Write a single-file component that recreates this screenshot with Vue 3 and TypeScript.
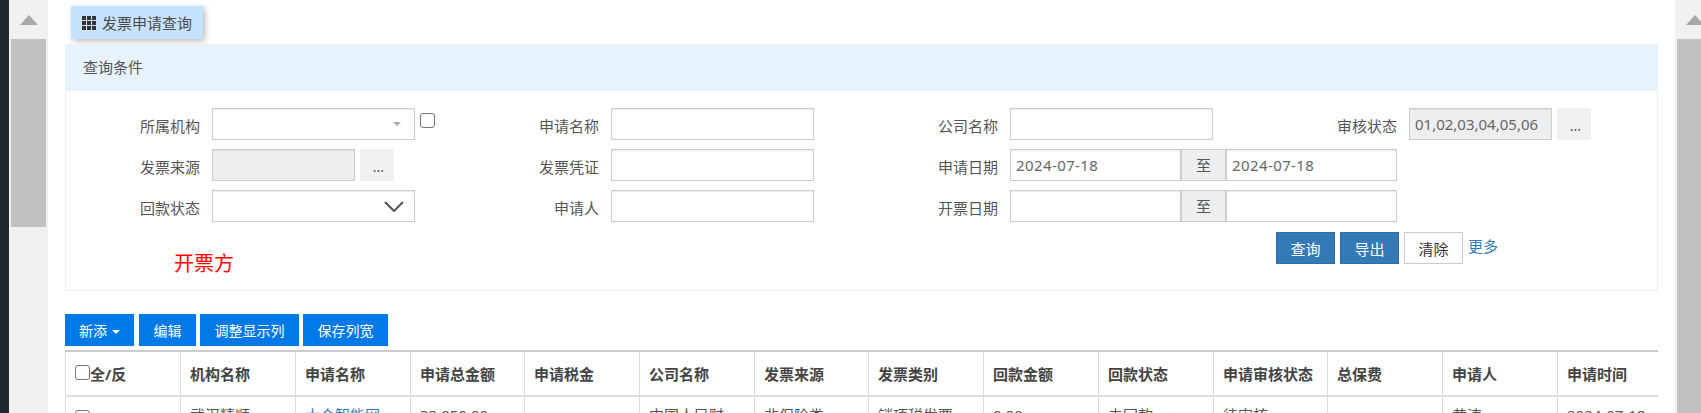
<script setup lang="ts">
const columns: string[] = ['机构名称', '申请名称', '申请总金额', '申请税金', '公司名称', '发票来源', '发票类别', '回款金额', '回款状态', '申请审核状态', '总保费', '申请人', '申请时间']
const widths: number[] = [115, 115, 115, 114, 115, 115, 114, 115, 115, 115, 114, 115, 115, 101]
const row: string[] = ['武汉精顺', '大众智能网', '33,050.00', '', '中国人民财', '非保险类', '销项税发票', '0.00', '未回款', '待审核', '', '黄涛', '2024-07-18']
const tools: { label: string; cls: string }[] = [
  { label: '编辑', cls: 'w-edit' },
  { label: '调整显示列', cls: 'w-cols' },
  { label: '保存列宽', cls: 'w-save' },
]
</script>

<template>
  <div class="screen">
    <div class="edge"></div>
    <div class="scrollbar left">
      <div class="arrow"></div>
      <div class="thumb short"></div>
    </div>

    <main class="main">
      <div class="tab">
        <svg class="grid-icon" width="14" height="14" viewBox="0 0 14 14" fill="#333">
          <rect x="0" y="0" width="4" height="4" /><rect x="5" y="0" width="4" height="4" /><rect x="10" y="0" width="4" height="4" />
          <rect x="0" y="5" width="4" height="4" /><rect x="5" y="5" width="4" height="4" /><rect x="10" y="5" width="4" height="4" />
          <rect x="0" y="10" width="4" height="4" /><rect x="5" y="10" width="4" height="4" /><rect x="10" y="10" width="4" height="4" />
        </svg>
        <span>发票申请查询</span>
      </div>

      <section class="panel">
        <header class="panel-head">查询条件</header>
        <div class="form">
          <div class="cell">
            <label class="lbl">所属机构</label>
            <div class="select">
              <span class="mini-caret"></span>
            </div>
            <input class="check form-check" type="checkbox" />
          </div>
          <div class="cell">
            <label class="lbl">申请名称</label>
            <input class="ctl" type="text" readonly />
          </div>
          <div class="cell">
            <label class="lbl">公司名称</label>
            <input class="ctl" type="text" readonly />
          </div>
          <div class="cell">
            <label class="lbl">审核状态</label>
            <input class="ctl short off" type="text" readonly value="01,02,03,04,05,06" />
            <button class="dots" type="button">...</button>
          </div>

          <div class="cell">
            <label class="lbl">发票来源</label>
            <input class="ctl short off" type="text" readonly />
            <button class="dots" type="button">...</button>
          </div>
          <div class="cell">
            <label class="lbl">发票凭证</label>
            <input class="ctl" type="text" readonly />
          </div>
          <div class="cell wide">
            <label class="lbl">申请日期</label>
            <input class="ctl date" type="text" readonly value="2024-07-18" />
            <span class="addon">至</span>
            <input class="ctl date" type="text" readonly value="2024-07-18" />
          </div>

          <div class="cell">
            <label class="lbl">回款状态</label>
            <div class="select">
              <svg class="chevron" width="20" height="11" viewBox="0 0 20 11" fill="none" stroke="#555" stroke-width="2">
                <path d="M1 1 L10 10 L19 1" />
              </svg>
            </div>
          </div>
          <div class="cell">
            <label class="lbl">申请人</label>
            <input class="ctl" type="text" readonly />
          </div>
          <div class="cell wide">
            <label class="lbl">开票日期</label>
            <input class="ctl date" type="text" readonly />
            <span class="addon">至</span>
            <input class="ctl date" type="text" readonly />
          </div>
        </div>

        <div class="actions">
          <div class="issuer">开票方</div>
          <button class="btn primary" type="button">查询</button>
          <button class="btn primary" type="button">导出</button>
          <button class="btn plain" type="button">清除</button>
          <a class="more">更多</a>
        </div>
      </section>

      <div class="toolbar">
        <button class="tool w-add" type="button">新添<span class="caret"></span></button>
        <button v-for="t in tools" :key="t.label" class="tool" :class="t.cls" type="button">{{ t.label }}</button>
      </div>

      <div class="table-wrap">
        <table class="table">
          <colgroup>
            <col v-for="(w, i) in widths" :key="i" :style="{ width: w + 'px' }" />
          </colgroup>
          <thead>
            <tr>
              <th class="select-all"><input class="check" type="checkbox" /><span>全/反</span></th>
              <th v-for="c in columns" :key="c">{{ c }}</th>
            </tr>
          </thead>
          <tbody>
            <tr>
              <td><input class="check row-check" type="checkbox" /></td>
              <td v-for="(v, i) in row" :key="i">
                <a v-if="i === 1" class="link">{{ v }}</a>
                <template v-else>{{ v }}</template>
              </td>
            </tr>
          </tbody>
        </table>
      </div>
    </main>

    <div class="scrollbar right">
      <div class="arrow"></div>
      <div class="thumb long"></div>
    </div>
  </div>
</template>

<style>
html,
body {
  margin: 0;
  overflow: hidden;
  background: #fff;
}
</style>

<style scoped>
.screen {
  display: flex;
  width: 1701px;
  height: 413px;
  overflow: hidden;
  background: #fff;
  color: #555;
  font-family: "Noto Sans", "Noto Sans CJK SC", sans-serif;
  font-size: 15px;
}
.edge {
  flex: none;
  width: 9px;
  background: #20292e;
}
.scrollbar {
  flex: none;
  width: 39px;
  box-sizing: border-box;
  padding: 0 2px;
  background: #f1f1f1;
}
.arrow {
  width: 0;
  height: 0;
  margin: 15px auto 0;
  border-left: 9.5px solid transparent;
  border-right: 9.5px solid transparent;
  border-bottom: 10px solid #a8a8a8;
}
.thumb {
  margin-top: 14px;
  background: #c1c1c1;
}
.thumb.short {
  height: 188px;
}
.thumb.long {
  height: 380px;
}
.main {
  flex: none;
  width: 1627px;
  box-sizing: border-box;
  padding: 6px 17px 0;
}
.tab {
  display: flex;
  align-items: center;
  gap: 6px;
  width: 132px;
  height: 33px;
  box-sizing: border-box;
  margin-left: 6px;
  padding-left: 11px;
  background: #c6e2ff;
  color: #4a4a4a;
  box-shadow: 2px 2px 6px rgba(0, 0, 0, 0.28);
}
.grid-icon {
  flex: none;
}
.panel {
  height: 247px;
  box-sizing: border-box;
  margin-top: 5px;
  border: 1px solid #e8f2fc;
  border-top: 0;
}
.panel-head {
  height: 47px;
  box-sizing: border-box;
  padding-left: 17px;
  background: #e8f2fc;
  line-height: 47px;
  color: #555;
}
.form {
  display: grid;
  grid-template-columns: repeat(4, 399px);
  row-gap: 9px;
  padding-top: 17px;
}
.cell {
  display: flex;
  height: 32px;
}
.cell.wide {
  grid-column: span 2;
}
.lbl {
  flex: none;
  width: 134px;
  margin-right: 12px;
  height: 32px;
  line-height: 37px;
  text-align: right;
  color: #555;
}
.ctl,
.select {
  width: 203px;
  height: 32px;
  box-sizing: border-box;
  margin: 0;
  padding: 0 5px;
  border: 1px solid #ccc;
  border-radius: 0;
  outline: none;
  background: #fff;
  box-shadow: inset 0 1px 1px rgba(0, 0, 0, 0.075);
  color: #666;
  font: inherit;
}
.ctl.short {
  width: 143px;
}
.ctl.off {
  background: #eee;
}
.ctl.date {
  width: 171px;
  letter-spacing: 0.4px;
}
.select {
  position: relative;
  padding: 0;
}
.mini-caret {
  position: absolute;
  top: 13px;
  right: 13px;
  width: 0;
  height: 0;
  border-left: 4px solid transparent;
  border-right: 4px solid transparent;
  border-top: 4px solid #aaa;
}
.chevron {
  position: absolute;
  top: 10px;
  right: 10px;
}
.check {
  appearance: none;
  flex: none;
  display: inline-block;
  width: 15px;
  height: 15px;
  box-sizing: border-box;
  margin: 0;
  border: 1px solid #767676;
  border-radius: 3px;
  background: #fff;
  vertical-align: middle;
}
.form-check {
  margin: 5px 0 0 5px;
}
.row-check {
  margin-top: 1px;
}
.dots {
  flex: none;
  width: 34px;
  height: 32px;
  margin: 0 0 0 5px;
  padding: 3px 0 0 3px;
  border: 0;
  background: #f0f0f0;
  color: #555;
  font: inherit;
  font-size: 14px;
}
.addon {
  flex: none;
  width: 45px;
  height: 32px;
  box-sizing: border-box;
  border: 1px solid #ccc;
  background: #eee;
  text-align: center;
  line-height: 30px;
  color: #555;
}
.actions {
  display: flex;
  align-items: flex-start;
  margin-top: 10px;
}
.issuer {
  flex: none;
  width: 1210px;
  box-sizing: border-box;
  padding: 18px 0 0 108px;
  color: #f00;
  font-size: 20px;
  line-height: 28px;
}
.btn {
  flex: none;
  width: 59px;
  height: 32px;
  box-sizing: border-box;
  margin: 0 5px 0 0;
  padding: 0;
  border: 1px solid #2e6da4;
  background: #337ab7;
  color: #fff;
  font: inherit;
}
.btn.plain {
  border-color: #ccc;
  background: #fff;
  color: #333;
}
.more {
  color: #337ab7;
  line-height: 28px;
}
.toolbar {
  display: flex;
  gap: 4px;
  margin-top: 23px;
}
.tool {
  height: 32px;
  box-sizing: border-box;
  margin: 0;
  padding: 0;
  border: 0;
  background: #0079e8;
  color: #fff;
  font: inherit;
  font-size: 14px;
}
.w-add {
  width: 69px;
  margin-right: 1px;
}
.w-edit {
  width: 57px;
}
.w-cols {
  width: 99px;
}
.w-save {
  width: 85px;
}
.caret {
  display: inline-block;
  margin-left: 5px;
  vertical-align: middle;
  border-left: 4px solid transparent;
  border-right: 4px solid transparent;
  border-top: 4px solid #fff;
}
.table-wrap {
  margin-top: 4px;
  width: 1593px;
  overflow: hidden;
}
.table {
  width: 1593px;
  table-layout: fixed;
  border-collapse: separate;
  border-spacing: 0;
  border-top: 2px solid #ccc;
}
th,
td {
  box-sizing: border-box;
  padding: 0 0 0 9px;
  border-left: 1px solid #ddd;
  text-align: left;
  white-space: nowrap;
  overflow: hidden;
}
th {
  height: 45px;
  border-bottom: 2px solid #ddd;
  color: #444;
  font-weight: 700;
}
td {
  height: 40px;
  padding-top: 8px;
  vertical-align: top;
  line-height: 20px;
  color: #555;
}
.select-all .check {
  margin-top: -3px;
}
.select-all span {
  vertical-align: middle;
}
.link {
  color: #337ab7;
}
</style>
